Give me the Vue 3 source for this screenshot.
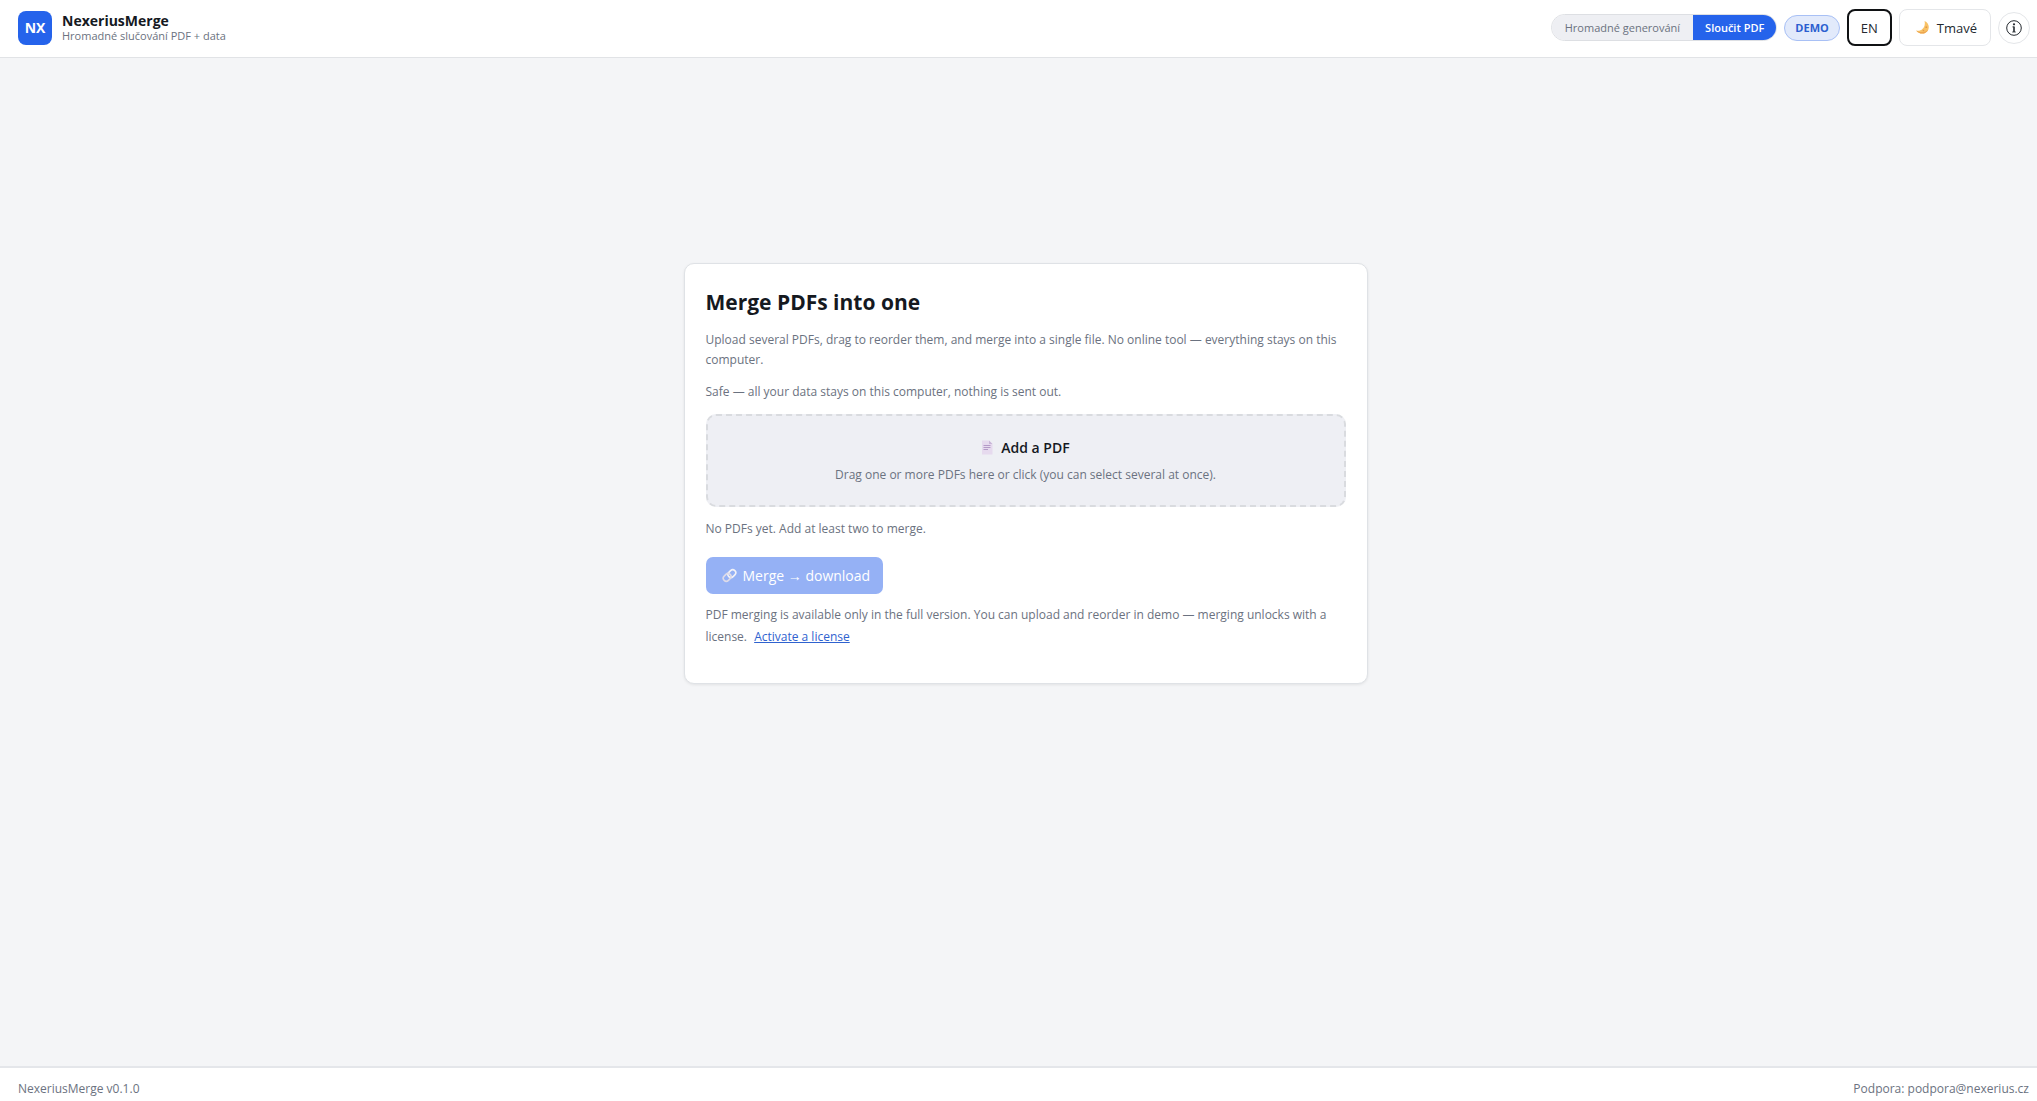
<template>
  <div class="app">
    <header class="topbar">
      <div class="brand">
        <div class="brand-logo">NX</div>
        <div class="brand-text">
          <span class="brand-name">NexeriusMerge</span>
          <span class="brand-sub">Hromadné slučování PDF + data</span>
        </div>
      </div>

      <div class="actions">
        <div class="mode-switch">
          <button
            v-for="m in modes"
            :key="m.id"
            type="button"
            class="mode-btn"
            :class="{ 'mode-btn--active': mode === m.id }"
            @click="mode = m.id"
          >
            {{ m.name }}
          </button>
        </div>
        <span class="badge">DEMO</span>
        <button type="button" class="btn btn-lang">EN</button>
        <button type="button" class="btn btn-theme">
          <svg class="icon-moon" viewBox="0 0 16 16" aria-hidden="true">
            <path d="M10.200 1C14 2.500 15.600 6.500 14.200 10C12.300 14.800 5.500 16.500 1.200 11.200C6 12.600 11.800 8.500 10.200 1Z" fill="#f8c266" />
            <path d="M1.200 11.200C5.500 16.500 12.300 14.800 14.200 10C11.500 13 6 14 1.200 11.200Z" fill="#eda650" />
            <circle cx="12" cy="7.600" r="1" fill="#e3994a" />
            <circle cx="9" cy="11.200" r="0.900" fill="#e3994a" />
          </svg>
          <span>Tmavé</span>
        </button>
        <button type="button" class="btn-info" aria-label="Info">
          <svg viewBox="0 0 16 16" aria-hidden="true">
            <circle cx="8" cy="8" r="7.300" fill="none" stroke="#24292f" stroke-width="1" />
            <circle cx="8" cy="4.300" r="1.100" fill="#24292f" />
            <path d="M8 6.600V12" fill="none" stroke="#24292f" stroke-width="1.600" />
            <path d="M6.400 6.900H8M6.200 12H9.800" fill="none" stroke="#24292f" stroke-width="0.800" />
          </svg>
        </button>
      </div>
    </header>

    <main class="content">
      <section class="card">
        <h1 class="title">Merge PDFs into one</h1>
        <p class="text">
          Upload several PDFs, drag to reorder them, and merge into a single file. No online tool — everything stays on this computer.
        </p>
        <p class="text">Safe — all your data stays on this computer, nothing is sent out.</p>

        <button type="button" class="dropzone">
          <span class="dropzone-title">
            <svg class="icon-doc" viewBox="0 0 12 15" aria-hidden="true">
              <path d="M1 0.500H8L11.500 4V14.500H1Z" fill="#e6daee" />
              <path d="M8 0.500L11.500 4H8Z" fill="#c9b5d8" />
              <path d="M2.500 5.500H9.500M2.500 7.500H9.500M2.500 9.500H7" stroke="#b49ac8" stroke-width="1" />
            </svg>
            Add a PDF
          </span>
          <span class="dropzone-sub">Drag one or more PDFs here or click (you can select several at once).</span>
        </button>

        <p class="text">No PDFs yet. Add at least two to merge.</p>

        <button type="button" class="btn-merge" disabled>
          <svg class="icon-link" viewBox="0 0 16 16" aria-hidden="true">
            <g fill="none" stroke-width="1.700">
              <rect x="6" y="2.800" width="9" height="6.400" rx="3.200" transform="rotate(-45 10.500 6)" stroke="#f3f2f7" />
              <rect x="1" y="6.800" width="9" height="6.400" rx="3.200" transform="rotate(-45 5.500 10)" stroke="#dedbe8" />
            </g>
          </svg>
          <span>Merge → download</span>
        </button>

        <p class="license">
          PDF merging is available only in the full version. You can upload and reorder in demo — merging unlocks with a license.
          <a href="#" class="license-link">Activate a license</a>
        </p>
      </section>
    </main>

    <footer class="footer">
      <span>NexeriusMerge v0.1.0</span>
      <span>Podpora: podpora@nexerius.cz</span>
    </footer>
  </div>
</template>

<script setup>
import { ref } from 'vue'

const modes = [
  { id: 'bulk', name: 'Hromadné generování' },
  { id: 'merge', name: 'Sloučit PDF' },
]

const mode = ref('merge')
</script>

<style>
body {
  margin: 0;
  background: #f4f5f7;
}
</style>

<style scoped>
.app {
  min-height: 100vh;
  display: flex;
  flex-direction: column;
  font-family: 'Segoe UI', 'Open Sans', 'Noto Sans', sans-serif;
  font-size: 12px;
  color: #15191f;
  background: #f4f5f7;
}

button {
  font-family: inherit;
  cursor: pointer;
}

/* Header */
.topbar {
  box-sizing: border-box;
  height: 58px;
  padding: 0 7px 2px 18px;
  display: flex;
  align-items: center;
  justify-content: space-between;
  background: #fff;
  border-bottom: 1px solid #e1e3e6;
}

.brand {
  display: flex;
  align-items: center;
  gap: 10px;
}

.brand-logo {
  width: 34px;
  height: 34px;
  border-radius: 8px;
  display: flex;
  align-items: center;
  justify-content: center;
  background: #2563eb;
  color: #fff;
  font-size: 14px;
  font-weight: 700;
}

.brand-text {
  display: flex;
  flex-direction: column;
}

.brand-name {
  font-size: 14px;
  font-weight: 700;
  line-height: 16px;
}

.brand-sub {
  font-size: 11px;
  line-height: 14px;
  color: #6b7280;
}

.actions {
  display: flex;
  align-items: center;
  gap: 7px;
}

.mode-switch {
  display: flex;
  border: 1px solid #dddfe3;
  border-radius: 14px;
  overflow: hidden;
}

.mode-btn {
  height: 25px;
  padding: 0 13px;
  border: none;
  background: #eeeff3;
  color: #6b7280;
  font-size: 11px;
}

.mode-btn--active {
  padding: 0 12px;
  background: #2563eb;
  color: #fff;
  font-weight: 600;
}

.badge {
  padding: 0 10px;
  border: 1px solid #a8c0f5;
  border-radius: 14px;
  background: #e2eafb;
  color: #2b5fd0;
  font-size: 11px;
  font-weight: 700;
  line-height: 24px;
}

.btn {
  box-sizing: border-box;
  height: 37px;
  border: 1px solid #e4e6e9;
  border-radius: 8px;
  background: #fff;
  color: #24292f;
  font-size: 13px;
}

.btn-lang {
  padding: 0 12px;
  border: 2px solid #101214;
}

.btn-theme {
  padding: 0 13px 0 15px;
  display: flex;
  align-items: center;
  gap: 7px;
}

.icon-moon {
  width: 15px;
  height: 15px;
}

.btn-info {
  width: 32px;
  height: 32px;
  padding: 0;
  display: flex;
  align-items: center;
  justify-content: center;
  border: 1px solid #e4e6e9;
  border-radius: 50%;
  background: #fff;
}

.btn-info svg {
  width: 16px;
  height: 16px;
}

/* Content */
.content {
  flex: 1;
  padding: 0 0 178px 14px;
  display: flex;
  align-items: center;
  justify-content: center;
}

.card {
  box-sizing: border-box;
  width: 100%;
  max-width: 684px;
  padding: 23px 21px 35px;
  border: 1px solid #dfe2e6;
  border-radius: 10px;
  background: #fff;
  box-shadow: 0 1px 3px rgba(0, 0, 0, 0.08);
}

.title {
  margin: 0 0 13px;
  font-size: 21px;
  font-weight: 700;
  line-height: 30px;
}

.text {
  margin: 0 0 12px;
  color: #6b7280;
  line-height: 20px;
}

.dropzone {
  box-sizing: border-box;
  width: 100%;
  margin: 0 0 12px;
  padding: 20px;
  display: flex;
  flex-direction: column;
  align-items: center;
  gap: 5px;
  border: 2px dashed #d9dbdf;
  border-radius: 10px;
  background: #eeeff4;
}

.dropzone-title {
  display: flex;
  align-items: center;
  gap: 8px;
  color: #15191f;
  font-size: 14px;
  font-weight: 600;
  line-height: 24px;
}

.icon-doc {
  width: 12px;
  height: 15px;
}

.dropzone-sub {
  color: #6b7280;
  font-size: 12px;
  line-height: 20px;
}

.btn-merge {
  height: 37px;
  margin: 18px 0 10px;
  padding: 0 13px 0 16px;
  display: flex;
  align-items: center;
  gap: 6px;
  border: none;
  border-radius: 7px;
  background: #95b1f5;
  color: #fff;
  font-size: 14px;
  cursor: default;
}

.icon-link {
  width: 15px;
  height: 15px;
}

.license {
  margin: 0;
  color: #6b7280;
  line-height: 22px;
}

.license-link {
  margin-left: 4px;
  color: #2f62cf;
}

/* Footer */
.footer {
  padding: 11px 8px 2px 18px;
  display: flex;
  justify-content: space-between;
  border-top: 2px solid #e4e6ea;
  background: #fff;
  color: #6b7280;
  line-height: 20px;
}
</style>
